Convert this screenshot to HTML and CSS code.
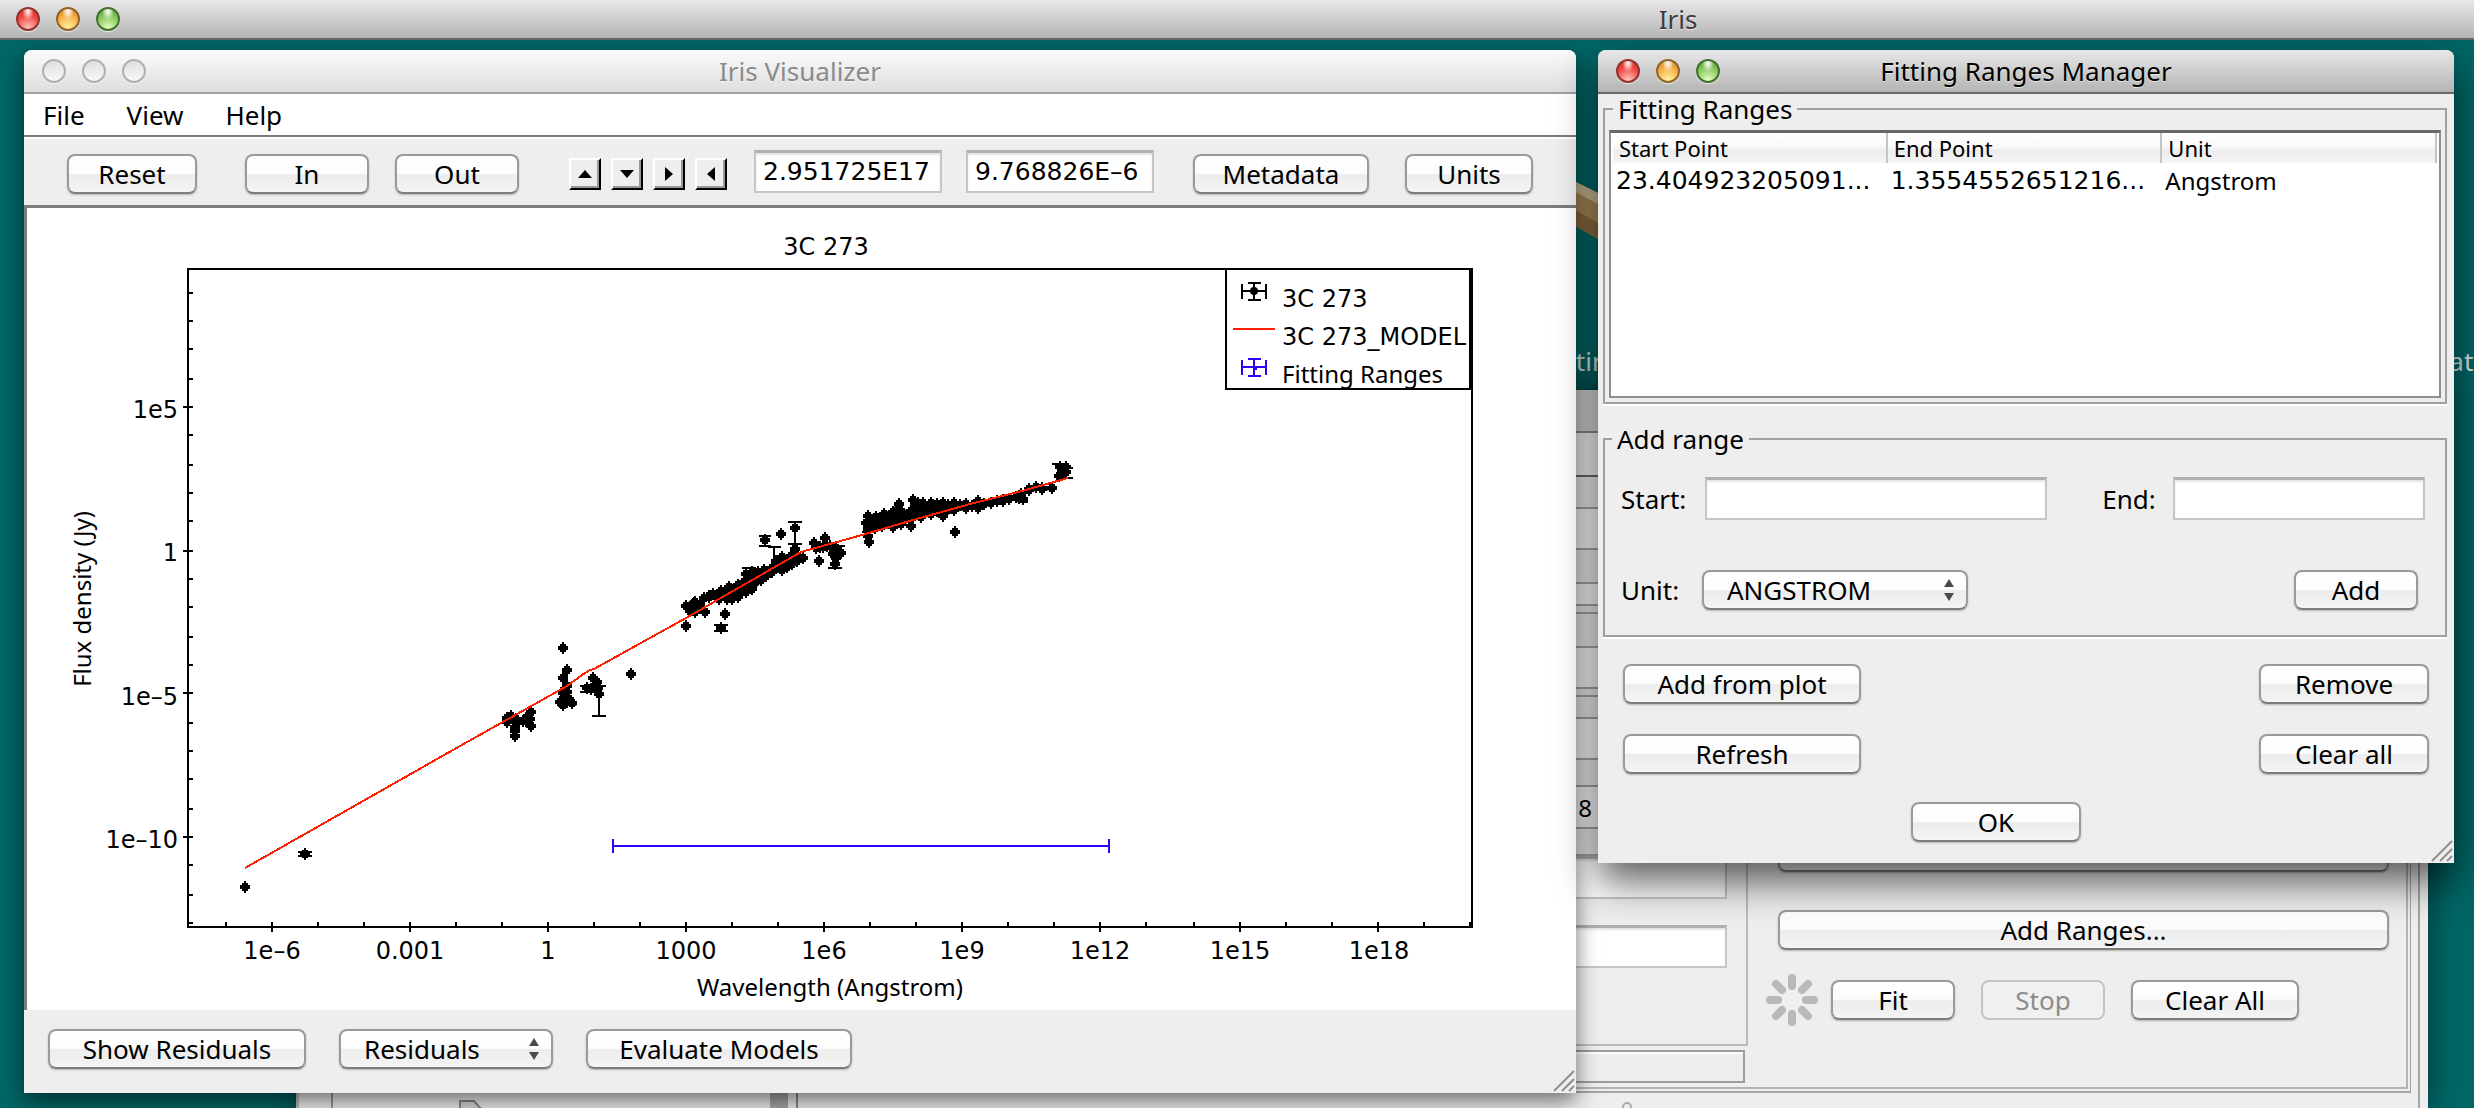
FILE: index.html
```html
<!DOCTYPE html>
<html lang="en">

<head>
    <meta charset="UTF-8">
    <meta name="viewport" content="width=device-width, initial-scale=1.0">
    <title>Iris</title>
    <link rel="stylesheet" href="styles.css">
</head>

<body>
    <header class="titlebar main-bar">
        <div class="lights">
            <i class="red"></i>
            <i class="amber"></i>
            <i class="green"></i>
        </div>
        <h1>Iris</h1>
    </header>

    <main class="desktop">
        <!-- desktop icons, mostly covered -->
        <svg class="ruler" viewBox="0 0 60 80">
            <path d="M0 0L60 30V78L0 44z" fill="#a98a58" />
            <path d="M0 0L60 30V42L0 10z" fill="#c9b893" />
            <path d="M0 28L60 62V78L0 44z" fill="#8b6c3e" />
        </svg>
        <span class="desk-label label-fit">tin</span>
        <span class="desk-label label-date">ate</span>

        <!-- fitting tool -->
        <section class="window back">
            <div class="back-title"></div>
            <div class="back-menu"></div>
            <div class="back-body">
                <div class="tree">
                    <div class="tree-list">
                        <svg width="24" height="24" viewBox="0 0 24 24">
                            <path d="M1 1h14l8 9v14H1z" fill="#d8d8d8" stroke="#888" stroke-width="2" />
                        </svg>
                    </div>
                    <div class="tree-scroll"></div>
                </div>
                <div class="back-right">
                    <div class="panes">
                        <div class="params">
                            <div class="strip s32"></div>
                            <div class="strip light s41"></div>
                            <div class="strip s34"></div>
                            <div class="strip light s22"></div>
                            <div class="strip s8"></div>
                            <div class="strip s34"></div>
                            <div class="strip light s41"></div>
                            <div class="strip s8"></div>
                            <div class="strip s22"></div>
                            <div class="strip light s41"></div>
                            <div class="strip s27"></div>
                            <div class="strip light value s42"><span>8</span></div>
                            <div class="strip s27"></div>
                            <div class="boxes">
                                <input type="text" aria-label="Statistic">
                                <input type="text" aria-label="Reduced statistic">
                            </div>
                            <div class="status"></div>
                        </div>
                        <div class="fit">
                            <button class="wide" aria-label="Options"></button>
                            <button class="wide">Add Ranges...</button>
                            <div class="fit-row">
                                <svg class="spinner" viewBox="-26 -26 52 52" stroke="#b9b9b9" stroke-width="8" stroke-linecap="round">
                                    <path d="M0-22V-14M0 22V14M-22 0H-14M22 0H14M-16-16L-10-10M16 16L10 10M16-16L10-10M-16 16L-10 10" />
                                </svg>
                                <button class="small">Fit</button>
                                <button class="small" disabled>Stop</button>
                                <button class="clear">Clear All</button>
                            </div>
                        </div>
                    </div>
                    <div class="knob-row"><i></i></div>
                </div>
            </div>
        </section>

        <!-- Iris Visualizer -->
        <section class="window visualizer">
            <header class="titlebar inactive">
                <div class="lights">
                    <i></i>
                    <i></i>
                    <i></i>
                </div>
                <h2>Iris Visualizer</h2>
            </header>
            <nav class="menu">
                <a href="#">File</a>
                <a href="#">View</a>
                <a href="#">Help</a>
            </nav>
            <div class="toolbar">
                <button class="reset">Reset</button>
                <div class="zoom">
                    <button class="small">In</button>
                    <button class="small">Out</button>
                </div>
                <div class="arrows">
                    <button aria-label="Up"><svg viewBox="0 0 14 14"><path d="M0 11L7 3L14 11z" /></svg></button>
                    <button aria-label="Down"><svg viewBox="0 0 14 14"><path d="M0 3L7 11L14 3z" /></svg></button>
                    <button aria-label="Right"><svg viewBox="0 0 14 14"><path d="M3 0L11 7L3 14z" /></svg></button>
                    <button aria-label="Left"><svg viewBox="0 0 14 14"><path d="M11 0L3 7L11 14z" /></svg></button>
                </div>
                <div class="coords">
                    <input type="text" value="2.951725E17" aria-label="X">
                    <input type="text" value="9.768826E–6" aria-label="Y">
                </div>
                <button class="metadata">Metadata</button>
                <button class="small">Units</button>
            </div>
            <div class="plot">
                <svg viewBox="27 209 1549 802">
                    <defs>
                        <marker id="dot" markerUnits="userSpaceOnUse" markerWidth="14" markerHeight="14" viewBox="-7 -7 14 14">
                            <path d="M-1-6H1V-4H3V-2H5V2H3V4H1V6H-1V4H-3V2H-5V-2H-3V-4H-1z" />
                        </marker>
                    </defs>
                    <text class="tick" x="826" y="256" text-anchor="middle">3C 273</text>

                    <!-- frame and ticks -->
                    <g class="axes">
                        <rect x="188" y="270" width="1284" height="658" />
                        <path d="M272 923V933M410 923V933M548 923V933M686 923V933M824 923V933M962 923V933M1100 923V933M1240 923V933M1378 923V933" />
                        <path d="M226 923V928M318 923V928M364 923V928M456 923V928M502 923V928M594 923V928M640 923V928M732 923V928M778 923V928M870 923V928M916 923V928M1008 923V928M1054 923V928M1146 923V928M1194 923V928M1286 923V928M1332 923V928M1424 923V928M1470 923V928" />
                        <path d="M183 408H193M183 552H193M183 694H193M183 838H193" />
                        <path d="M188 294H193M188 322H193M188 350H193M188 380H193M188 436H193M188 466H193M188 494H193M188 522H193M188 580H193M188 608H193M188 638H193M188 666H193M188 724H193M188 752H193M188 780H193M188 810H193M188 866H193M188 896H193M188 924H193" />
                    </g>
                    <g class="tick" text-anchor="middle">
                        <text x="272" y="960">1e–6</text>
                        <text x="410" y="960">0.001</text>
                        <text x="548" y="960">1</text>
                        <text x="686" y="960">1000</text>
                        <text x="824" y="960">1e6</text>
                        <text x="962" y="960">1e9</text>
                        <text x="1100" y="960">1e12</text>
                        <text x="1240" y="960">1e15</text>
                        <text x="1379" y="960">1e18</text>
                    </g>
                    <g class="tick" text-anchor="end">
                        <text x="178" y="419">1e5</text>
                        <text x="178" y="562">1</text>
                        <text x="178" y="706">1e–5</text>
                        <text x="178" y="849">1e–10</text>
                    </g>
                    <text class="label" x="830" y="997" text-anchor="middle">Wavelength (Angstrom)</text>
                    <text class="label" transform="translate(91 600) rotate(-90)" text-anchor="middle">Flux density (Jy)</text>

                    <!-- crowded parts of the spectrum -->
                    <g class="dots">
                        <path d="M704 599L709 597L713 595L721 592L729 588L738 586L744 583L746 575L752 573L758 573L764 571L772 569L776 562L782 558L791 557L795 550L796 555L803 559L797 562L792 565L787 568L782 571L772 573L766 577L761 581L752 590L746 593L738 598L732 600L727 600L719 600L709 598z" />
                        <path d="M868 517L876 518L884 515L893 513L899 505L902 513L911 512L913 501L918 504L923 504L931 504L937 505L943 504L948 506L954 504L960 506L966 505L966 509L954 511L943 516L937 512L931 515L921 518L911 520L901 525L893 528L882 527L875 529L868 530L866 524z" />
                        <path d="M966 507L972 507L978 503L984 505L991 504L997 502L1003 501L1009 500L1019 499L1023 500L1021 495L1029 490L1036 488L1042 490L1052 489L1042 489L1029 491L1016 498L1003 502L991 504L978 509z" />
                        <path d="M563 694L567 693L569 700L572 704L567 703L563 706L560 703z" />
                        <path d="M686 607L694 604L698 608L695 613L690 612z" />
                    </g>
                    <g class="loose">
                        <polyline points="245,888 245,888 305,855 507,719 511,717 516,720 507,723 517,722 523,722 528,717 531,713 526,722 528,723 531,727 530,720 515,732 515,737 515,728 563,649 567,671 563,679 567,687 565,690 631,675 593,679 597,683 587,689 595,687 591,690 598,689 599,695 695,603 700,607 705,613 686,627 725,615 721,629 765,541 781,535 795,529 814,544 825,539 819,562 816,549 820,548 823,548 827,547 830,547 836,549 841,554 837,555 833,555 836,559 835,565 869,543 868,537 911,527 955,533 943,517 978,502 1060,468 1064,470 1066,473 1062,472 1062,476 1059,477 1066,468 1066,468" />
                    </g>
                    <path class="bars" d="M298 853H312M298 857H312M580 687H606M580 693H600M599 695V717M592 717H606M714 626H728M714 632H728M759 537H771M759 547H771M765 537V547M768 548H781M774 548V560M788 523H802M795 523V553M788 545H802M742 569H756M826 547H845M828 569H842M862 533H876M1052 465H1066M1060 469H1073M1060 479H1073M1024 503H1028" />

                    <polyline class="model" points="245,869 460,747 567,687 582,676 590,671 594,670 686,619 747,584 801,553 862,536 913,521 970,505 1022,492 1068,479" />
                    <path class="range" d="M613 847H1109M613 840V854M1109 840V854" />

                    <!-- legend -->
                    <rect class="key" x="1226" y="270" width="244" height="120" />
                    <path class="bars" d="M1242 292H1266M1242 285V300M1266 285V300M1254 284V300M1248 284H1261M1248 301H1261" />
                    <circle cx="1254" cy="292" r="4" />
                    <path class="model" d="M1233 330H1275" />
                    <path class="range" d="M1242 368H1266M1242 361V376M1266 361V376M1254 360V376M1248 360H1261M1248 377H1261M1256 369V371" />
                    <text class="tick" x="1282" y="308">3C 273</text>
                    <text class="tick" x="1282" y="346">3C 273_MODEL</text>
                    <text class="label" x="1282" y="384">Fitting Ranges</text>
                </svg>
            </div>
            <footer class="plot-tools">
                <button class="residuals">Show Residuals</button>
                <span class="select type">
                    <select aria-label="Residuals type">
                        <option>Residuals</option>
                    </select>
                    <svg viewBox="0 0 10 22"><path d="M0 8L5 0L10 8zM0 14L5 22L10 14z" /></svg>
                </span>
                <button class="evaluate">Evaluate Models</button>
            </footer>
            <svg class="grip" viewBox="0 0 24 24"><path d="M2 22L22 2M10 22L22 10M17 22L22 17" /></svg>
        </section>

        <!-- Fitting Ranges Manager -->
        <section class="window manager">
            <header class="titlebar">
                <div class="lights">
                    <i class="red"></i>
                    <i class="amber"></i>
                    <i class="green"></i>
                </div>
                <h2>Fitting Ranges Manager</h2>
            </header>
            <fieldset class="ranges">
                <legend>Fitting Ranges</legend>
                <div class="table-box">
                    <table>
                        <thead>
                            <tr>
                                <th>Start Point</th>
                                <th>End Point</th>
                                <th>Unit</th>
                            </tr>
                        </thead>
                        <tbody>
                            <tr>
                                <td>23.404923205091...</td>
                                <td>1.3554552651216...</td>
                                <td class="unit">Angstrom</td>
                            </tr>
                        </tbody>
                    </table>
                </div>
            </fieldset>
            <fieldset class="add-range">
                <legend>Add range</legend>
                <div class="row">
                    <label for="start">Start:</label>
                    <input type="text" id="start">
                    <label class="end" for="end">End:</label>
                    <input type="text" id="end">
                </div>
                <div class="row">
                    <label for="unit">Unit:</label>
                    <span class="select units">
                        <select id="unit">
                            <option>ANGSTROM</option>
                        </select>
                        <svg viewBox="0 0 10 22"><path d="M0 8L5 0L10 8zM0 14L5 22L10 14z" /></svg>
                    </span>
                    <button class="small add">Add</button>
                </div>
            </fieldset>
            <div class="actions">
                <button>Add from plot</button>
                <button>Remove</button>
                <button>Refresh</button>
                <button>Clear all</button>
            </div>
            <div class="ok">
                <button>OK</button>
            </div>
            <svg class="grip" viewBox="0 0 24 24"><path d="M2 22L22 2M10 22L22 10M17 22L22 17" /></svg>
        </section>
    </main>
</body>

</html>
```
FILE: styles.css
```css
* {
    box-sizing: border-box;
    margin: 0;
    padding: 0;
}

body {
    display: flex;
    flex-direction: column;
    height: 100vh;
    overflow: hidden;
    background: #006666;
    color: #000;
    font: 26px/30px "Noto Sans", "Open Sans", sans-serif;
}

button,
input,
select {
    font: inherit;
    color: inherit;
}

/* title bars */

.titlebar {
    position: relative;
    display: flex;
    align-items: center;
    height: 44px;
    padding: 0 18px;
    border-bottom: 2px solid #686868;
    border-radius: 8px 8px 0 0;
    background: linear-gradient(#e8e8e8, #b4b4b4);
}

.titlebar h1,
.titlebar h2 {
    position: absolute;
    left: 0;
    right: 0;
    text-align: center;
    font-size: 26px;
    font-weight: normal;
    text-shadow: 0 1px 0 rgba(255, 255, 255, .6);
}

.main-bar {
    flex: none;
    height: 40px;
    padding: 0 16px;
    border-radius: 0;
}

.main-bar h1 {
    left: 882px;
    color: #3c3c3c;
}

.inactive {
    border-color: #a0a0a0;
    background: linear-gradient(#fbfbfb, #dedede);
}

.inactive h2 {
    color: #8a8a8a;
}

.lights {
    display: flex;
    gap: 16px;
}

.lights i {
    width: 24px;
    height: 24px;
    border: 2px solid #b0b0b0;
    border-radius: 50%;
    background: linear-gradient(#e0e0e0, #f8f8f8);
    box-shadow: 0 1px 1px rgba(255, 255, 255, .7);
}

.lights .red {
    border-color: #93332e;
    background: radial-gradient(ellipse at 50% 10%, #fff 0, #f58a84 25%, transparent 40%), radial-gradient(circle at 50% 95%, #ffc4c0, #f04440 60%, #c62a28);
}

.lights .amber {
    border-color: #93642a;
    background: radial-gradient(ellipse at 50% 10%, #fff 0, #f6c98a 25%, transparent 40%), radial-gradient(circle at 50% 95%, #fff3a0, #f5ae44 60%, #c87e24);
}

.lights .green {
    border-color: #447030;
    background: radial-gradient(ellipse at 50% 10%, #fff 0, #b4dc9c 25%, transparent 40%), radial-gradient(circle at 50% 95%, #e2ffbc, #86c65c 60%, #529a36);
}

/* desktop */

.desktop {
    position: relative;
    flex: 1;
    overflow: hidden;
}

.ruler {
    position: absolute;
    right: 846px;
    top: 138px;
    width: 60px;
    height: 80px;
}

.desk-label {
    position: absolute;
    top: 306px;
    color: #d8e4e4;
}

.label-fit {
    right: 866px;
}

.label-date {
    right: -14px;
}

.window {
    position: absolute;
    background: #eee;
}

.grip {
    position: absolute;
    right: 0;
    bottom: 0;
    width: 24px;
    height: 24px;
    fill: none;
    stroke: #8e8e8e;
    stroke-width: 2;
}

/* controls */

button,
.select {
    height: 40px;
    border: 2px solid #9a9a9a;
    border-bottom-color: #7c7c7c;
    border-radius: 8px;
    background: linear-gradient(#fff 0, #fcfcfc 48%, #ececec 52%, #f4f4f4);
    box-shadow: 0 1px 2px rgba(0, 0, 0, .25);
    line-height: 34px;
    text-align: center;
}

button:disabled {
    border-color: #c4c4c4;
    box-shadow: none;
    color: #8c8c8c;
    background: #f0f0f0;
}

.small {
    width: 124px;
}

.select {
    position: relative;
    display: block;
}

.select select {
    width: 100%;
    height: 100%;
    padding-left: 23px;
    border: 0;
    background: none;
    appearance: none;
}

.select svg {
    position: absolute;
    right: 12px;
    top: 7px;
    width: 10px;
    height: 22px;
    fill: #4a4a4a;
    pointer-events: none;
}

input {
    height: 43px;
    min-width: 0;
    padding: 0 7px;
    border: 2px solid #c6c6c6;
    border-top: 3px solid #b0b0b0;
    background: #fff;
    box-shadow: inset 0 2px 2px #e4e4e4;
}

/* fitting tool behind */

.back {
    left: 296px;
    right: 46px;
    top: 350px;
    bottom: 0;
    display: flex;
    flex-direction: column;
    overflow: hidden;
    box-shadow: 0 0 30px rgba(0, 0, 0, .5);
}

.back-title {
    flex: none;
    height: 43px;
    border-bottom: 2px solid #8c8c8c;
    background: #d4d4d4;
}

.back-menu {
    flex: none;
    height: 44px;
    border-bottom: 2px solid #686868;
    background: #f4f4f4;
}

.back-body {
    flex: 1;
    display: flex;
    min-height: 0;
}

.tree {
    display: flex;
    width: 502px;
    padding: 0 8px 0 4px;
    border-left: 3px solid #bbb;
    border-right: 2px solid #8a8a8a;
}

.tree-list {
    flex: 1;
    display: flex;
    align-items: flex-end;
    padding-left: 126px;
    border-left: 2px solid #999;
    margin-left: 28px;
}

.tree-list svg {
    margin-bottom: -16px;
}

.tree-scroll {
    width: 18px;
    background: #a8a8a8;
}

.back-right {
    flex: 1;
    margin-right: 8px;
    padding-right: 10px;
    border-right: 2px solid #a4a4a4;
}

.panes {
    display: flex;
    height: 612px;
    margin-left: 42px;
    border-right: 2px solid #b4b4b4;
    border-bottom: 2px solid #b4b4b4;
    border-left: 2px solid #a4a4a4;
    box-shadow: 2px 2px 0 #eee, 3px 4px 0 #a4a4a4;
}

.params {
    flex: none;
    display: flex;
    flex-direction: column;
    width: 906px;
}

.strip {
    flex: none;
    border-bottom: 2px solid #a6a6a6;
}

.light {
    background: #fafafa;
}

.s8 { height: 8px; }
.s22 { height: 22px; }
.s27 { height: 27px; }
.s32 { height: 32px; }
.s34 { height: 34px; }
.s41 { height: 41px; }
.s42 { height: 42px; }

.value {
    display: flex;
    justify-content: flex-end;
    padding: 6px 156px 0 0;
    font-size: 24px;
}

.boxes {
    flex: 1;
    display: flex;
    flex-direction: column;
    align-items: flex-end;
    justify-content: flex-end;
    gap: 26px;
    padding: 0 19px 76px 0;
    border-right: 2px solid #bbb;
    border-bottom: 2px solid #bbb;
}

.boxes input {
    width: 400px;
}

.status {
    height: 38px;
    margin: 4px 3px 4px 0;
    border: 2px solid #9c9c9c;
    box-shadow: inset 0 2px 0 #fff;
}

.fit {
    flex: 1;
    display: flex;
    flex-direction: column;
    justify-content: flex-end;
    padding: 0 17px 61px 18px;
}

.wide {
    margin-left: 12px;
    margin-bottom: 38px;
    flex: none;
}

.wide + .wide {
    margin-bottom: 24px;
}

.fit-row {
    display: flex;
    align-items: center;
    gap: 26px;
}

.spinner {
    width: 52px;
    height: 52px;
    margin-right: -13px;
}

.clear {
    width: 168px;
}

.knob-row {
    padding: 13px 0 0 824px;
}

.knob-row i {
    display: block;
    width: 10px;
    height: 10px;
    border: 2px solid #aaa;
    border-radius: 50%;
}

/* visualizer */

.visualizer {
    left: 24px;
    right: 898px;
    top: 10px;
    border-radius: 8px 8px 0 0;
    box-shadow: 0 8px 22px rgba(0, 0, 0, .55);
}

.menu {
    display: flex;
    gap: 42px;
    height: 43px;
    padding: 6px 19px;
    background: #fff;
    border-bottom: 2px solid #7c7c7c;
}

.menu a {
    color: #000;
    text-decoration: none;
}

.toolbar {
    display: flex;
    align-items: center;
    height: 68px;
    padding: 4px 43px 0;
    border-top: 2px solid #fff;
}

.reset {
    width: 130px;
}

.zoom {
    display: flex;
    gap: 26px;
    margin: 0 50px 0 48px;
}

.arrows {
    display: flex;
    gap: 10px;
}

.arrows button {
    display: flex;
    align-items: center;
    justify-content: center;
    width: 32px;
    height: 32px;
    border: 2px solid #fff;
    border-right-color: #000;
    border-bottom-color: #000;
    border-radius: 0;
    background: #eee;
    box-shadow: inset -2px -2px 0 #999;
}

.arrows svg {
    width: 14px;
    height: 14px;
}

.coords {
    display: flex;
    gap: 24px;
    margin: 0 39px 6px 27px;
}

.coords input {
    width: 188px;
    font-family: "DejaVu Sans", sans-serif;
    font-size: 25px;
}

.metadata {
    width: 176px;
    margin-right: 36px;
}

.toolbar > .small {
    width: 128px;
}

.plot {
    border-top: 3px solid #7c7c7c;
    border-left: 3px solid #7c7c7c;
    background: #fff;
}

.plot svg {
    display: block;
    width: 100%;
}

.label {
    font-size: 24px;
}

.tick {
    font: 24px "DejaVu Sans", sans-serif;
}

.axes,
.key {
    fill: none;
    stroke: #000;
    stroke-width: 2;
}

.key {
    fill: #fff;
}

.dots path {
    stroke: #000;
    stroke-width: 4;
    marker-start: url(#dot);
    marker-mid: url(#dot);
}

.loose polyline {
    fill: none;
    marker-mid: url(#dot);
}

.bars,
.model,
.range {
    fill: none;
    stroke: #000;
    stroke-width: 2;
    shape-rendering: crispEdges;
}

.model {
    stroke: #ff1e00;
}

.range {
    stroke: #3200ff;
}

.plot-tools {
    display: flex;
    gap: 33px;
    height: 83px;
    padding: 19px 24px;
}

.residuals {
    width: 258px;
}

.type {
    width: 214px;
}

.evaluate {
    width: 266px;
}

/* fitting ranges manager */

.manager {
    right: 20px;
    top: 10px;
    width: 856px;
    padding-bottom: 21px;
    border-radius: 8px 8px 0 0;
    box-shadow: 0 18px 40px rgba(0, 0, 0, .65);
}

fieldset {
    min-width: 0;
    margin: 0 7px 0 5px;
    border: 2px solid #a0a0a0;
    box-shadow: 0 2px 0 #fff;
}

legend {
    margin-left: 4px;
    padding: 0 5px;
}

.ranges {
    padding: 6px 4px 4px;
}

.table-box {
    height: 268px;
    padding: 0 2px;
    border: 2px solid #8e8e8e;
    border-top: 3px solid #686868;
    background: #fff;
}

table {
    width: 100%;
    table-layout: fixed;
    border-collapse: collapse;
}

th {
    height: 30px;
    padding-left: 6px;
    background: linear-gradient(#fff 0, #fafafa 45%, #ececec 60%, #f6f6f6);
    box-shadow: inset -2px 0 0 #c4c4c4;
    font-size: 22px;
    line-height: 28px;
    font-weight: normal;
    text-align: left;
}

td {
    height: 36px;
    padding-left: 3px;
    font-family: "DejaVu Sans", sans-serif;
    font-size: 25px;
    white-space: nowrap;
}

td.unit {
    font-family: "Noto Sans", sans-serif;
    font-size: 24px;
}

.add-range {
    margin-top: 20px;
    padding: 23px 20px 25px 16px;
}

.add-range legend {
    margin-left: -9px;
}

.row {
    display: flex;
    align-items: center;
}

.row + .row {
    margin-top: 50px;
}

.row label {
    flex: none;
    width: 84px;
}

.row .end {
    width: 71px;
    margin-left: 55px;
}

#start {
    flex: 344;
    width: 0;
}

#end {
    flex: 248;
    width: 0;
}

.units {
    width: 266px;
    margin-left: -3px;
}

.add {
    margin: 0 7px 0 auto;
}

.actions {
    display: grid;
    grid-template-columns: 238px 170px;
    justify-content: space-between;
    gap: 30px;
    margin: 27px 25px 28px;
}

.ok {
    display: flex;
    justify-content: center;
    padding-right: 60px;
}

.ok button {
    width: 170px;
}
```
